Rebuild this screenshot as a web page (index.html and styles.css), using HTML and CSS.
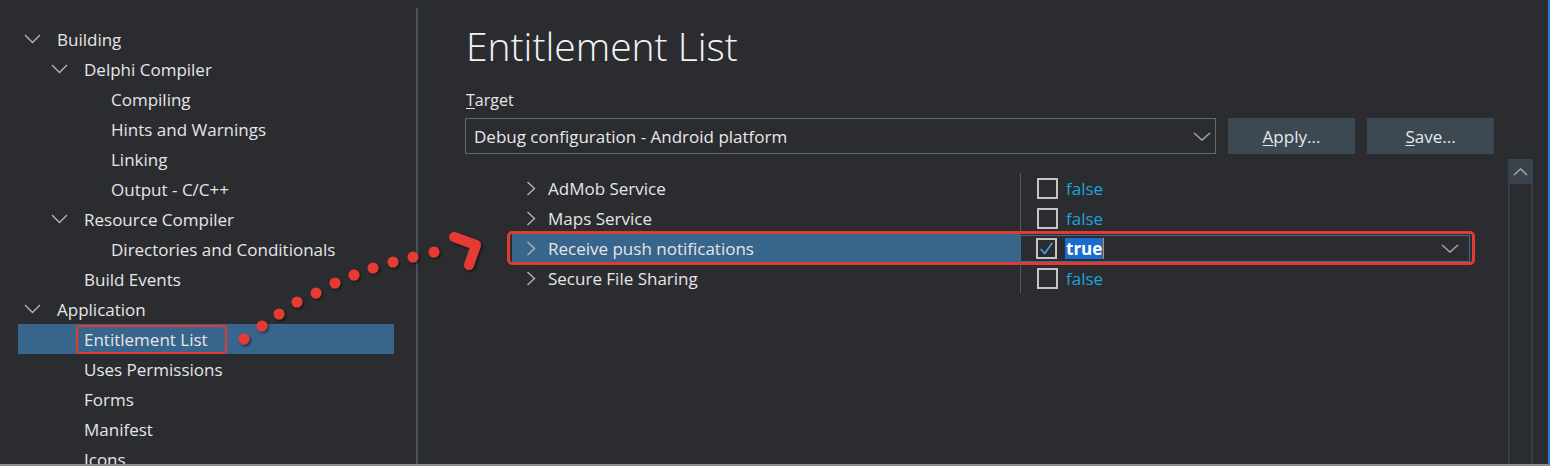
FILE: index.html
```html
<!DOCTYPE html>
<html>
<head>
<meta charset="utf-8">
<link rel="stylesheet" href="styles.css">
</head>
<body>
<div class="window">
  <aside class="sidebar">
    <ul class="tree">
      <li class="node l1"><span class="chev"><svg width="17" height="10" viewBox="0 0 17 10"><polyline points="1,1 8.5,8.5 16,1"/></svg></span><span class="label">Building</span></li>
      <li class="node l2"><span class="chev"><svg width="17" height="10" viewBox="0 0 17 10"><polyline points="1,1 8.5,8.5 16,1"/></svg></span><span class="label">Delphi Compiler</span></li>
      <li class="node l3"><span class="chev"></span><span class="label">Compiling</span></li>
      <li class="node l3"><span class="chev"></span><span class="label">Hints and Warnings</span></li>
      <li class="node l3"><span class="chev"></span><span class="label">Linking</span></li>
      <li class="node l3"><span class="chev"></span><span class="label">Output - C/C++</span></li>
      <li class="node l2"><span class="chev"><svg width="17" height="10" viewBox="0 0 17 10"><polyline points="1,1 8.5,8.5 16,1"/></svg></span><span class="label">Resource Compiler</span></li>
      <li class="node l3"><span class="chev"></span><span class="label">Directories and Conditionals</span></li>
      <li class="node l2"><span class="chev"></span><span class="label">Build Events</span></li>
      <li class="node l1"><span class="chev"><svg width="17" height="10" viewBox="0 0 17 10"><polyline points="1,1 8.5,8.5 16,1"/></svg></span><span class="label">Application</span></li>
      <li class="node l2 selected"><span class="chev"></span><span class="label boxed">Entitlement List</span></li>
      <li class="node l2"><span class="chev"></span><span class="label">Uses Permissions</span></li>
      <li class="node l2"><span class="chev"></span><span class="label">Forms</span></li>
      <li class="node l2"><span class="chev"></span><span class="label">Manifest</span></li>
      <li class="node l2"><span class="chev"></span><span class="label">Icons</span></li>
    </ul>
  </aside>

  <main class="content">
    <h1 class="title">Entitlement List</h1>
    <div class="field-label"><u>T</u>arget</div>
    <div class="target-row">
      <div class="combo">
        <span class="combo-text">Debug configuration - Android platform</span>
        <svg class="combo-chev" width="18" height="9" viewBox="0 0 18 9"><polyline points="1,1 9,8 17,1"/></svg>
      </div>
      <button class="btn btn-apply"><u>A</u>pply...</button>
      <button class="btn btn-save"><u>S</u>ave...</button>
    </div>

    <div class="props">
      <div class="grid">
        <div class="prow">
          <div class="pname"><span class="pchev"><svg width="10" height="15" viewBox="0 0 10 15"><polyline points="1.5,1 8.5,7.5 1.5,14"/></svg></span><span>AdMob Service</span></div>
          <div class="pval"><span class="cb"></span><span class="val">false</span></div>
        </div>
        <div class="prow">
          <div class="pname"><span class="pchev"><svg width="10" height="15" viewBox="0 0 10 15"><polyline points="1.5,1 8.5,7.5 1.5,14"/></svg></span><span>Maps Service</span></div>
          <div class="pval"><span class="cb"></span><span class="val">false</span></div>
        </div>
        <div class="prow sel">
          <div class="pname"><span class="pchev"><svg width="10" height="15" viewBox="0 0 10 15"><polyline points="1.5,1 8.5,7.5 1.5,14"/></svg></span><span>Receive push notifications</span></div>
          <div class="pval">
            <span class="cb checked"><svg width="19" height="19" viewBox="0 0 19 19"><polyline points="3,10 7.5,15 16,3"/></svg></span>
            <span class="val-edit">true</span><span class="caret"></span>
            <svg class="edit-chev" width="18" height="9" viewBox="0 0 18 9"><polyline points="1,1 9,8 17,1"/></svg>
          </div>
        </div>
        <div class="prow">
          <div class="pname"><span class="pchev"><svg width="10" height="15" viewBox="0 0 10 15"><polyline points="1.5,1 8.5,7.5 1.5,14"/></svg></span><span>Secure File Sharing</span></div>
          <div class="pval"><span class="cb"></span><span class="val">false</span></div>
        </div>
      </div>
      <div class="scrollbar">
        <div class="sb-up"><svg width="15" height="8" viewBox="0 0 15 8"><polyline points="1,7 7.5,1 14,7"/></svg></div>
        <div class="sb-track"></div>
      </div>
    </div>
  </main>

  <svg class="annot" width="1550" height="466" viewBox="0 0 1550 466">
    <defs>
      <filter id="sh" x="-50%" y="-50%" width="200%" height="200%">
        <feDropShadow dx="1.5" dy="1.5" stdDeviation="1" flood-color="#000" flood-opacity="0.55"/>
      </filter>
    </defs>
    <g fill="#e53a33" filter="url(#sh)">
      <circle cx="244" cy="339" r="5.5"/>
      <circle cx="262" cy="326" r="5.5"/>
      <circle cx="279" cy="314" r="5.5"/>
      <circle cx="297" cy="302" r="5.5"/>
      <circle cx="316" cy="293" r="5.5"/>
      <circle cx="335" cy="283" r="5.5"/>
      <circle cx="354" cy="275" r="5.5"/>
      <circle cx="373" cy="268" r="5.5"/>
      <circle cx="393" cy="262" r="5.5"/>
      <circle cx="413" cy="257" r="5.5"/>
      <circle cx="434" cy="252" r="5.5"/>
      <path d="M454,237 L476,245 L469,265" fill="none" stroke="#e53a33" stroke-width="10" stroke-linecap="round" stroke-linejoin="round"/>
    </g>
  </svg>
</div>
</body>
</html>
```

FILE: styles.css
```css
* { box-sizing: border-box; }

html, body {
  margin: 0;
  padding: 0;
  background: #2b2c30;
}

body {
  font-family: "Open Sans", "Noto Sans", sans-serif;
  font-size: 17px;
  color: #e6e6e6;
}

.window {
  position: relative;
  width: 1550px;
  height: 466px;
  display: flex;
  background: #2b2c30;
  border-bottom: 2px solid #8c8c8c;
  border-right: 2px solid #2f7bd0;
  overflow: hidden;
}

/* ---------- sidebar tree ---------- */
.sidebar {
  width: 418px;
  flex: 0 0 418px;
  margin-top: 8px;
  border-right: 2px solid #46525d;
  overflow: hidden;
}

.tree {
  list-style: none;
  margin: 16px 0 0 18px;
  padding: 0;
  width: 376px;
}

.node {
  height: 30px;
  display: flex;
  align-items: center;
  white-space: nowrap;
}

.node.l1 { padding-left: 6px; }
.node.l2 { padding-left: 33px; }
.node.l3 { padding-left: 60px; }

.node .chev {
  width: 33px;
  flex: 0 0 33px;
  display: flex;
  align-items: center;
}

.chev svg polyline {
  fill: none;
  stroke: #b4b4b4;
  stroke-width: 1.4;
}

.node.selected { background: #37658c; }

.label.boxed {
  margin-left: -8px;
  padding: 0 17px 0 6px;
  height: 29px;
  display: inline-flex;
  align-items: center;
  border: 2px solid #e23a33;
  border-radius: 4px;
}

/* ---------- content ---------- */
.content {
  flex: 1;
  padding: 21px 0 0 47px;
  display: flex;
  flex-direction: column;
}

.title {
  margin: 0;
  padding-left: 1px;
  font-family: "Open Sans", "Noto Sans", sans-serif;
  font-weight: 300;
  font-size: 39px;
  line-height: 50px;
  color: #f3f3f3;
}

.field-label {
  margin-top: 19px;
  padding-left: 1px;
  height: 20px;
  line-height: 20px;
  font-size: 16px;
  color: #e6e6e6;
}

.field-label u, .btn u { text-decoration-thickness: 1px; text-underline-offset: 2px; }

.target-row {
  margin-top: 8px;
  display: flex;
  height: 36px;
}

.combo {
  width: 751px;
  height: 36px;
  border: 1px solid #5d6974;
  display: flex;
  align-items: center;
  padding: 0 4px 0 8px;
}

.combo-text { flex: 1; color: #e8e8e8; }

.combo-chev polyline, .edit-chev polyline, .sb-up polyline {
  fill: none;
  stroke: #a8a8a8;
  stroke-width: 1.4;
}

.btn {
  width: 127px;
  height: 36px;
  border: none;
  background: #3c4852;
  color: #e8e8e8;
  font-family: "Open Sans", "Noto Sans", sans-serif;
  font-size: 17px;
  padding: 0;
}

.btn-apply { margin-left: 12px; }
.btn-save { margin-left: 12px; }

/* ---------- property grid ---------- */
.props {
  margin-top: 5px;
  flex: 1;
  display: flex;
}

.grid {
  width: 958px;
  margin-left: 47px;
  padding-top: 14px;
}

.prow {
  position: relative;
  height: 30px;
  display: flex;
}

.pname {
  width: 508px;
  flex: 0 0 508px;
  display: flex;
  align-items: center;
  padding-left: 14px;
  white-space: nowrap;
}

.pchev {
  width: 22px;
  display: flex;
  align-items: center;
}

.pchev polyline {
  fill: none;
  stroke: #b4b4b4;
  stroke-width: 1.4;
}

.pval {
  flex: 1;
  display: flex;
  align-items: center;
  border-left: 1px solid #55585d;
  padding-left: 16px;
}

.cb {
  width: 21px;
  height: 21px;
  border: 2px solid #c4c4c4;
  margin-right: 8px;
  display: flex;
  align-items: center;
  justify-content: center;
}

.cb svg polyline {
  fill: none;
  stroke: #4f9ee0;
  stroke-width: 1.8;
}

.val {
  color: #1ea3df;
}

.prow.sel .pname { background: #37658c; }

.prow.sel .pval {
  margin: 2px 0 1px;
  border: 1px solid #3a6b96;
  padding-left: 15px;
}

.val-edit {
  background: #1b6ccc;
  color: #ffffff;
  font-weight: 700;
  padding: 0 1px;
  line-height: 21px;
}

.caret {
  width: 1px;
  height: 21px;
  background: #e2822e;
}

.edit-chev { margin-left: auto; margin-right: 10px; }

.prow.sel::after {
  content: "";
  position: absolute;
  left: -5px;
  right: -5px;
  top: -2px;
  bottom: -2px;
  border: 3px solid #e23a33;
  border-radius: 5px;
}

/* ---------- scrollbar ---------- */
.scrollbar {
  margin-left: 38px;
  width: 25px;
  display: flex;
  flex-direction: column;
}

.sb-up {
  height: 25px;
  background: #3a434b;
  display: flex;
  align-items: center;
  justify-content: center;
}

.sb-track {
  flex: 1;
  border-left: 2px solid #353d45;
  border-right: 2px solid #353d45;
}

/* ---------- annotation overlay ---------- */
.annot {
  position: absolute;
  left: 0;
  top: 0;
  pointer-events: none;
}
```
